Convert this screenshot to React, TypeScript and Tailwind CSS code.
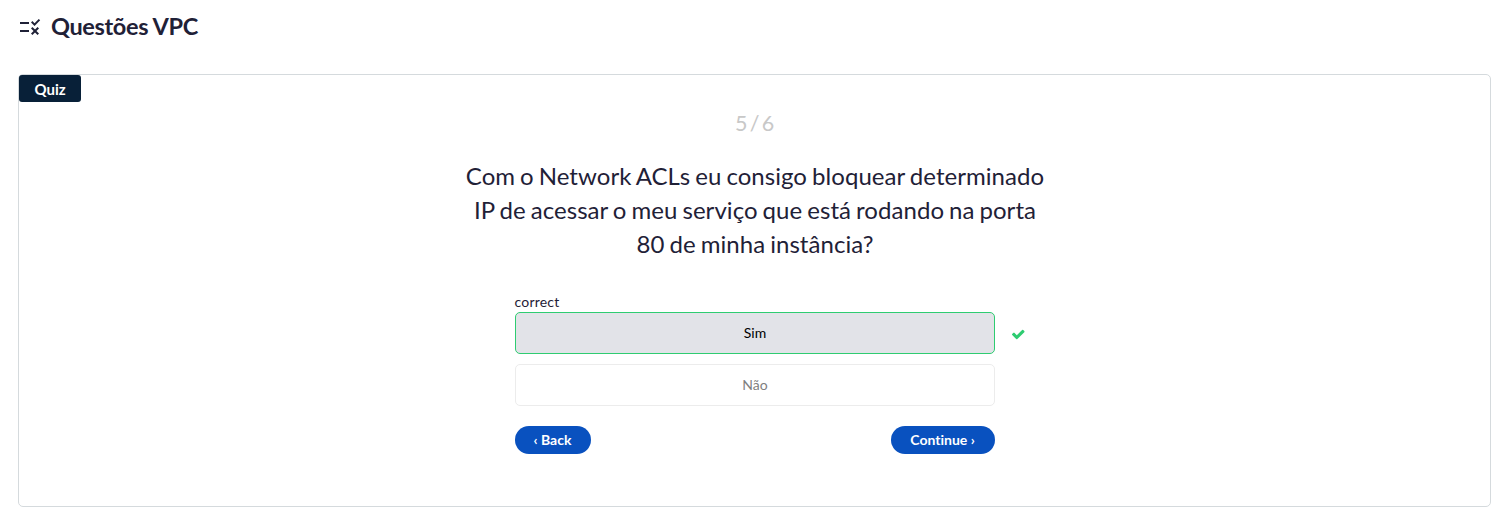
import { MdRule } from "react-icons/md";

function CheckIcon() {
  return (
    <svg viewBox="0 0 1792 1792" className="mt-[2px] h-[14.5px] w-[14.5px] shrink-0 fill-[#2ecc71]" aria-hidden="true">
      <path d="M1671 566q0 40-28 68l-724 724-136 136q-28 28-68 28t-68-28l-136-136-362-362q-28-28-28-68t28-68l136-136q28-28 68-28t68 28l294 295 656-657q28-28 68-28t68 28l136 136q28 28 28 68z" />
    </svg>
  );
}

export default function App() {
  return (
    <main className="flex h-[522px] flex-col bg-white px-[18px] pt-[9px] font-['Lato',sans-serif] text-[#1f2137]">
      <header className="flex h-9 items-center gap-[9px]">
        <MdRule size={24} />
        <h1 className="pb-[2px] text-[23.5px] leading-[34px] font-bold tracking-[-0.36px]">Questões VPC</h1>
      </header>

      <section className="mt-[29px] flex h-[433px] w-[1473px] flex-col items-start rounded-[5px] border border-[#d5dadd]">
        <span className="flex h-[27px] w-[62px] items-center justify-center rounded-[3px] bg-[#082038] pt-px text-[15px] font-bold text-white">
          Quiz
        </span>

        <div className="flex w-full flex-col items-center">
          <p className="mt-[5px] text-[21.5px] leading-[33px] tracking-[-0.3px] text-[#c8c8c8] [word-spacing:-2.6px]">5 / 6</p>
          <h2 className="mt-[19px] w-[640px] pl-px text-center text-[24px] leading-[34px] tracking-[0.05px] [word-spacing:-1.2px]">
            Com o Network ACLs eu consigo bloquear determinado
            <br />
            IP de acessar o meu serviço que está rodando na porta
            <br />
            80 de minha instância?
          </h2>

          <div className="mt-[30px] w-[480px] text-[14px]">
            <p className="h-[21px] leading-[21px] tracking-[0.2px]">correct</p>
            <div className="-mr-8 flex items-center gap-4">
              <button className="h-[42px] w-[480px] shrink-0 rounded-[5px] border border-[#2ecc71] bg-[#e2e3e8] pb-[2px] pl-px text-black">
                Sim
              </button>
              <CheckIcon />
            </div>
            <button className="mt-[10px] block h-[42px] w-[480px] rounded-[5px] border border-[#ececec] pb-[2px] pl-px text-[#808080]">
              Não
            </button>
            <div className="mt-5 flex justify-between font-bold text-white">
              <button className="h-7 w-[76px] rounded-full bg-[#0951bf] pb-[2px] [font-variant-ligatures:none]">‹ Back</button>
              <button className="h-7 w-[104px] rounded-full bg-[#0951bf] pb-[2px] [font-variant-ligatures:none]">Continue ›</button>
            </div>
          </div>
        </div>
      </section>
    </main>
  );
}
